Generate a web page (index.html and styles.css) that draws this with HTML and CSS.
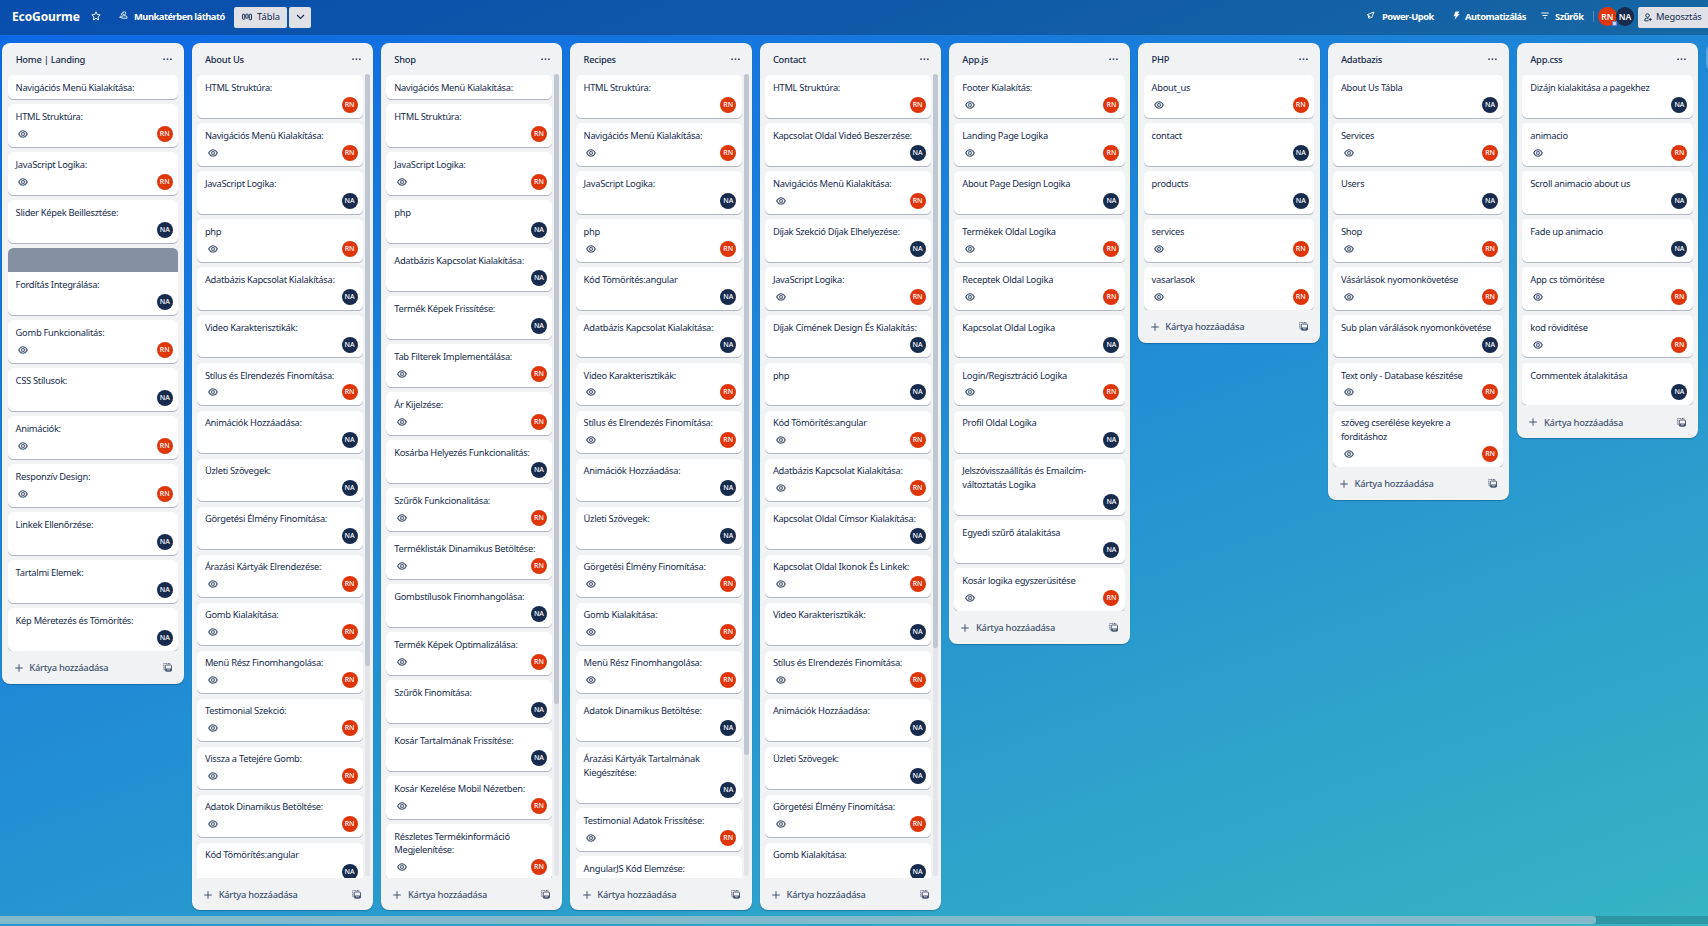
FILE: index.html
```html
<!DOCTYPE html>
<html lang="hu">
<head>
<meta charset="utf-8">
<title>EcoGourme</title>
<link rel="stylesheet" href="styles.css">
</head>
<body>
<svg class="sprite" aria-hidden="true">
  <symbol id="eye" viewBox="0 0 18 14"><path d="M1.200 7C3 3.400 5.800 1.200 9 1.200S15 3.400 16.800 7C15 10.600 12.200 12.800 9 12.800S3 10.600 1.200 7Z" fill="none" stroke="currentColor" stroke-width="2"/><circle cx="9" cy="7" r="2.600" fill="none" stroke="currentColor" stroke-width="2"/></symbol>
  <symbol id="plus" viewBox="0 0 16 16"><path d="M8 0.500V15.500M0.500 8H15.500" stroke="currentColor" stroke-width="2"/></symbol>
  <symbol id="template" viewBox="0 0 18 18"><path d="M14 2.500V1H1.500V13.500H3" fill="none" stroke="currentColor" stroke-width="1.700" stroke-dasharray="2.200 1.200"/><rect x="4.500" y="4" width="12.500" height="12.500" rx="2" fill="none" stroke="currentColor" stroke-width="1.900"/><path d="M5 11H17V16H5Z" fill="currentColor"/><path d="M8 13.500H14" stroke="#f1f2f4" stroke-width="1.300"/></symbol>
  <symbol id="dots" viewBox="0 0 16 4"><circle cx="2" cy="2" r="1.700"/><circle cx="8" cy="2" r="1.700"/><circle cx="14" cy="2" r="1.700"/></symbol>
</svg>
<header class="topbar">
  <h1 class="title">EcoGourme</h1>
  <svg class="icon star" viewBox="0 0 18 18"><path d="M9 1.500L11.300 6.300L16.500 7L12.700 10.700L13.600 16L9 13.500L4.400 16L5.300 10.700L1.500 7L6.700 6.300Z" fill="none" stroke="currentColor" stroke-width="1.700" stroke-linejoin="round"/></svg>
  <div class="item visibility">
    <svg class="icon people" viewBox="0 0 18 16"><g fill="none" stroke="currentColor" stroke-width="1.700"><circle cx="10.500" cy="4.500" r="3"/><path d="M5.500 14.500V12.500Q5.500 9.500 8.500 9.500H12.500Q16 9.500 16 12.500V14.500ZM7 3.500Q3.500 4.500 5.500 8M5 9.500Q1.500 10 1.500 13H5"/></g></svg>
    <span>Munkatérben látható</span>
  </div>
  <div class="button board-view">
    <svg class="icon board-icon" viewBox="0 0 18 14"><g fill="none" stroke="currentColor" stroke-width="1.800"><rect x="1" y="2" width="4" height="9" rx="1"/><rect x="7" y="2" width="4" height="7" rx="1"/><rect x="13" y="2" width="4" height="10" rx="1"/></g></svg>
    <span>Tábla</span>
  </div>
  <div class="button view-menu"><svg class="icon chevron" viewBox="0 0 18 12"><path d="M2 2L9 9L16 2" fill="none" stroke="currentColor" stroke-width="2.200"/></svg></div>
  <div class="spacer"></div>
  <div class="item powerups">
    <svg class="icon rocket" viewBox="0 0 18 18"><path d="M16 2L11 14L7.500 10.500L2 7.500ZM7.500 10.500L5.500 12.500M5 10V14H9" fill="none" stroke="currentColor" stroke-width="1.800" stroke-linejoin="round"/></svg>
    <span>Power-Upok</span>
  </div>
  <div class="item automation">
    <svg class="icon bolt" viewBox="0 0 14 18"><path d="M5 1H12.500L10 6H13.500L3 17.500L5.500 10.500H1Z" fill="currentColor"/></svg>
    <span>Automatizálás</span>
  </div>
  <div class="item filters">
    <svg class="icon filter" viewBox="0 0 16 14"><path d="M0.500 2H15.500M3 7H13M6 12H10" stroke="currentColor" stroke-width="1.900"/></svg>
    <span>Szűrők</span>
  </div>
  <div class="divider"></div>
  <div class="members">
    <span class="member rn">RN<i class="admin"></i></span>
    <span class="member na">NA</span>
  </div>
  <div class="button share">
    <svg class="icon adduser" viewBox="0 0 16 18"><g fill="none" stroke="currentColor" stroke-width="1.800"><circle cx="7" cy="5" r="3.500"/><path d="M9 15.500H1.500V14Q1.500 10.500 5 10.500H9M12.500 10V16M9.500 13H15.500"/></g></svg>
    <span>Megosztás</span>
  </div>
</header>
<main class="board" id="board"></main>
<div class="board-scroll"><div class="board-thumb"></div></div>
<script src="board.js"></script>
</body>
</html>
```
FILE: styles.css
```css
* { box-sizing: border-box; }
html, body { margin: 0; height: 100%; overflow: hidden; }
body {
  display: flex;
  flex-direction: column;
  background: linear-gradient(160deg, #0c66e4, #37b4c3);
  font-family: "Noto Sans", "Open Sans", sans-serif;
  font-size: 9.33px;
  line-height: 13.33px;
  color: #172b4d;
}
.sprite { position: absolute; width: 0; height: 0; }
.icon { display: block; flex: none; }

.topbar {
  display: flex;
  align-items: center;
  flex: none;
  height: 35px;
  padding: 0 0 4px 12px;
  background: rgba(0, 0, 0, .24);
  color: #fff;
  font-weight: 700;
  white-space: nowrap;
  overflow: hidden;
}
.title { margin: 0; width: 65px; font-size: 12px; font-weight: 700; letter-spacing: -.1px; }
.star { width: 10px; height: 10px; margin-left: 14px; }
.item { display: flex; align-items: center; flex: none; letter-spacing: -.48px; }
.visibility { margin-left: 18px; width: 115px; gap: 6px; }
.people { width: 9px; height: 8px; }
.button {
  display: flex;
  align-items: center;
  flex: none;
  height: 21px;
  margin-top: 3px;
  border-radius: 2px;
  background: #dfe1e6;
  color: #172b4d;
  font-weight: 400;
}
.board-view { width: 53px; padding-left: 8px; gap: 5px; }
.board-icon { width: 10px; height: 8px; }
.view-menu { width: 22px; margin-left: 2px; justify-content: center; }
.chevron { width: 9px; height: 6px; }
.spacer { flex: 1; }
.item span, .title { padding-top: 2px; }
.powerups { width: 87px; gap: 7px; }
.rocket { width: 9px; height: 9px; }
.automation { width: 88px; gap: 5px; }
.bolt { width: 7px; height: 9px; }
.filters { width: 52px; gap: 6px; }
.filter { width: 8px; height: 7px; }
.divider { width: 1px; height: 11px; margin-top: 2px; background: rgba(255, 255, 255, .25); }
.members { display: flex; width: 44px; padding: 2px 0 0 4px; }
.member {
  position: relative;
  display: grid;
  place-items: center;
  width: 18.700px;
  height: 18.700px;
  border-radius: 50%;
  font-size: 8.500px;
  font-weight: 600;
}
.member + .member { margin-left: -1px; }
.admin { position: absolute; right: 0; bottom: 0; width: 5px; height: 5px; background: #c7d0ef; border: 1px solid #6f7fc4; }
.rn { background: #de350b; color: #fff; }
.na { background: #172b4d; color: #fff; }
.share { width: 78px; margin-right: -8px; padding-left: 6px; gap: 4px; letter-spacing: -.15px; }
.adduser { width: 8px; height: 9px; }

.board {
  display: flex;
  flex: none;
  align-items: flex-start;
  gap: 8px;
  height: 881px;
  padding: 8px 0 6px 2.300px;
  overflow: hidden;
}
.list {
  display: flex;
  flex-direction: column;
  flex: none;
  width: 181.330px;
  max-height: 867px;
  border-radius: 8px;
  background: #f1f2f4;
  box-shadow: 0 1px 1px rgba(9, 30, 66, .3);
}
.list-head {
  display: flex;
  flex: none;
  align-items: center;
  justify-content: space-between;
  height: 32px;
  padding: 1px 12px 0 13.330px;
  font-weight: 500;
  letter-spacing: -.25px;
}
.dots { width: 9px; height: 2.250px; fill: #44546f; }
.list-body { display: flex; min-height: 0; }
.cards {
  display: flex;
  flex: 1;
  flex-direction: column;
  gap: 5.330px;
  min-width: 0;
  padding: 0 5.500px;
  overflow: hidden;
}
.scrolling .list-body { height: 803px; }
.scrolling .cards { padding-right: 2px; }
.track { flex: none; width: 5px; height: 802px; margin: -1px 3px 0 0; border-radius: 3px; background: #e3e5e9; }
.thumb { border-radius: 3px; background: #c1c7d0; }
.card {
  flex: none;
  border-radius: 5.330px;
  background: #fff;
  box-shadow: 0 1px 0 rgba(9, 30, 66, .28);
  overflow: hidden;
}
.card-inner { padding: 5.700px 5.330px 4.970px 7.800px; }
.card-text { white-space: pre; letter-spacing: -.29px; }
.card-foot { display: flex; align-items: center; justify-content: space-between; height: 16px; margin-top: 2.670px; padding-left: 2.700px; }
.eye { width: 10px; height: 8px; color: #44546f; }
.avatar {
  display: grid;
  place-items: center;
  width: 16px;
  height: 16px;
  margin-left: auto;
  border-radius: 50%;
  font-size: 7px;
  line-height: 16px;
  font-weight: 500;
}
.cover::before { content: ""; display: block; height: 24px; background: #8590a2; }
.list-foot {
  display: flex;
  flex: none;
  align-items: center;
  height: 33px;
  padding: 1px 12px 0 12.500px;
  color: #44546f;
  font-weight: 500;
  letter-spacing: -.26px;
}
.scrolling .list-foot { height: 32px; }
.list-foot .plus { width: 8px; height: 8px; margin-right: 6.500px; }
.list-foot .template { width: 9px; height: 9px; margin-left: auto; }
.add-list { flex: none; width: 181px; height: 29px; border-radius: 8px; background: rgba(255, 255, 255, .24); }

.board-scroll { flex: none; height: 8px; background: rgba(0, 0, 0, .15); }
.board-thumb { width: 1596px; height: 8px; border-radius: 0 3px 3px 0; background: #82b9cb; }
```
FILE: board.js
```js
// Card prefix: "R" = RN with watch icon, "r" = RN without it, "N" = NA, "-" = no footer, "C" = NA with a cover.
const lists = [
  { name: "Home | Landing", cards: ["-Navigációs Menü Kialakítása:", "RHTML Struktúra:", "RJavaScript Logika:", "NSlider Képek Beillesztése:", "CFordítás Integrálása:", "RGomb Funkcionalitás:", "NCSS Stílusok:", "RAnimációk:", "RResponzív Design:", "NLinkek Ellenőrzése:", "NTartalmi Elemek:", "NKép Méretezés és Tömörítés:"] },
  { name: "About Us", thumb: 592, cards: ["rHTML Struktúra:", "RNavigációs Menü Kialakítása:", "NJavaScript Logika:", "Rphp", "NAdatbázis Kapcsolat Kialakítása:", "NVideo Karakterisztikák:", "RStílus és Elrendezés Finomítása:", "NAnimációk Hozzáadása:", "NÜzleti Szövegek:", "NGörgetési Élmény Finomítása:", "RÁrazási Kártyák Elrendezése:", "RGomb Kialakítása:", "RMenü Rész Finomhangolása:", "RTestimonial Szekció:", "RVissza a Tetejére Gomb:", "RAdatok Dinamikus Betöltése:", "NKód Tömörítés:angular"] },
  { name: "Shop", thumb: 630, cards: ["-Navigációs Menü Kialakítása:", "rHTML Struktúra:", "RJavaScript Logika:", "Nphp", "NAdatbázis Kapcsolat Kialakítása:", "NTermék Képek Frissítése:", "RTab Filterek Implementálása:", "RÁr Kijelzése:", "NKosárba Helyezés Funkcionalitás:", "RSzűrők Funkcionalitása:", "RTerméklisták Dinamikus Betöltése:", "NGombstílusok Finomhangolása:", "RTermék Képek Optimalizálása:", "NSzűrők Finomítása:", "NKosár Tartalmának Frissítése:", "RKosár Kezelése Mobil Nézetben:", "RRészletes Termékinformáció\nMegjelenítése:"] },
  { name: "Recipes", thumb: 681, cards: ["rHTML Struktúra:", "RNavigációs Menü Kialakítása:", "NJavaScript Logika:", "Rphp", "NKód Tömörítés:angular", "NAdatbázis Kapcsolat Kialakítása:", "RVideo Karakterisztikák:", "RStílus és Elrendezés Finomítása:", "NAnimációk Hozzáadása:", "NÜzleti Szövegek:", "RGörgetési Élmény Finomítása:", "RGomb Kialakítása:", "RMenü Rész Finomhangolása:", "NAdatok Dinamikus Betöltése:", "NÁrazási Kártyák Tartalmának\nKiegészítése:", "RTestimonial Adatok Frissítése:", "NAngularJS Kód Elemzése:"] },
  { name: "Contact", thumb: 574, cards: ["rHTML Struktúra:", "NKapcsolat Oldal Videó Beszerzése:", "RNavigációs Menü Kialakítása:", "NDíjak Szekció Díjak Elhelyezése:", "RJavaScript Logika:", "NDíjak Címének Design És Kialakítás:", "Nphp", "RKód Tömörítés:angular", "RAdatbázis Kapcsolat Kialakítása:", "NKapcsolat Oldal Címsor Kialakítása:", "RKapcsolat Oldal Ikonok És Linkek:", "NVideo Karakterisztikák:", "RStílus és Elrendezés Finomítása:", "NAnimációk Hozzáadása:", "NÜzleti Szövegek:", "RGörgetési Élmény Finomítása:", "NGomb Kialakítása:"] },
  { name: "App.js", cards: ["RFooter Kialakítás:", "RLanding Page Logika", "NAbout Page Design Logika", "RTermékek Oldal Logika", "RReceptek Oldal Logika", "NKapcsolat Oldal Logika", "RLogin/Regisztráció Logika", "NProfil Oldal Logika", "NJelszóvisszaállítás és Emailcím-\nváltoztatás Logika", "NEgyedi szűrő átalakitása", "RKosár logika egyszerüsitése"] },
  { name: "PHP", cards: ["RAbout_us", "Ncontact", "Nproducts", "Rservices", "Rvasarlasok"] },
  { name: "Adatbazis", cards: ["NAbout Us Tábla", "RServices", "NUsers", "RShop", "RVásárlások nyomonkövetése", "NSub plan várálások nyomonkövetése", "RText only - Database készitése", "Rszöveg cserélése keyekre a\nforditáshoz"] },
  { name: "App.css", cards: ["NDizájn kialakitása a pagekhez", "Ranimacio", "NScroll animacio about us", "NFade up animacio", "RApp cs tömöritése", "Rkod röviditése", "NCommentek átalakitása"] }
];

const icon = (name) => `<svg class="icon ${name}"><use href="#${name}"/></svg>`;

function card(entry) {
  const kind = entry[0];
  const who = kind.toLowerCase() === "r" ? "RN" : "NA";
  const foot = kind === "-" ? "" :
    `<div class="card-foot">${kind === "R" ? icon("eye") : ""}<span class="avatar ${who.toLowerCase()}">${who}</span></div>`;
  return `<article class="card${kind === "C" ? " cover" : ""}"><div class="card-inner"><div class="card-text">${entry.slice(1)}</div>${foot}</div></article>`;
}

function list(l) {
  const track = l.thumb ? `<div class="track"><div class="thumb" style="height:${l.thumb}px"></div></div>` : "";
  return `<section class="list${l.thumb ? " scrolling" : ""}">
    <div class="list-head"><span>${l.name}</span>${icon("dots")}</div>
    <div class="list-body"><div class="cards">${l.cards.map(card).join("")}</div>${track}</div>
    <div class="list-foot">${icon("plus")}<span>Kártya hozzáadása</span>${icon("template")}</div>
  </section>`;
}

document.getElementById("board").innerHTML = lists.map(list).join("") + '<div class="add-list"></div>';
```
